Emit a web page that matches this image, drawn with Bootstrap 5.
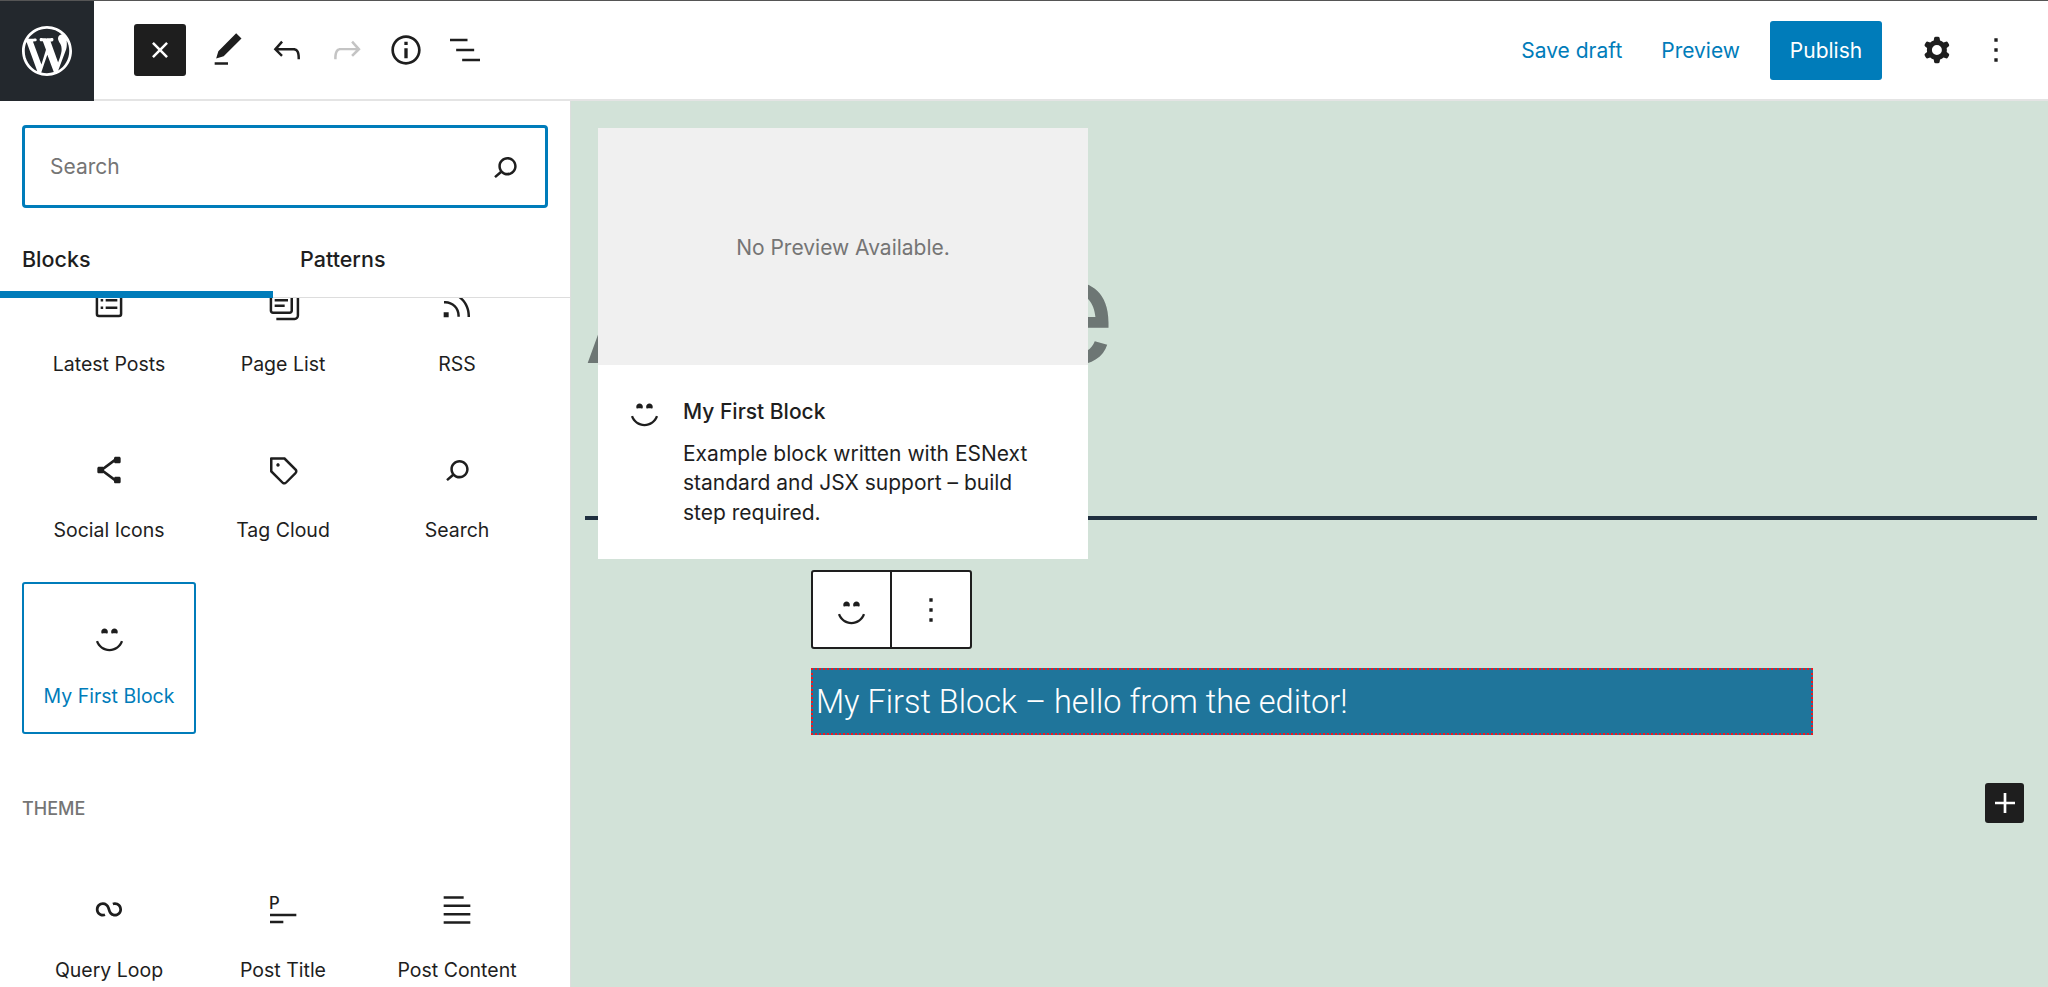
<!doctype html>
<html lang="en">
<head>
<meta charset="utf-8">
<title>Block editor</title>
<link href="https://cdn.jsdelivr.net/npm/bootstrap@5.3.0/dist/css/bootstrap.min.css" rel="stylesheet">
<style>
html,body{height:987px;overflow:hidden}
body{font-family:Inter,"Liberation Sans",sans-serif;color:#1e1e1e;background:#fff;font-size:20px}
svg{fill:currentColor;flex:none;display:block}
.wp-top{height:101px;border-top:1px solid #555;border-bottom:2px solid #e4e4e4;background:#fff}
.wp-logo{width:94px;height:100px;margin-top:-1px;margin-bottom:-2px;background:#23282d;color:#fff}
.wp-close{width:52px;height:52px;border-radius:3px;background:#1e1e1e;color:#fff;margin-left:40px;margin-right:22px}
.tool-ic{width:40px;height:40px}
.tool-wrap{gap:19.3px}
.redo-ic{color:#c4c4c4}
.wp-link{color:#007cba;text-decoration:none;font-size:21px;line-height:28px;margin-top:1px}
.gap-preview{margin-left:39px}
.wp-publish{width:112px;height:59px;background:#007cba;color:#fff;font-size:21px;border:0;border-radius:3px;padding:1px 0 0;margin-left:30px;margin-right:35px}
.more-ic{margin-left:19px;margin-right:32px}
.wp-side{width:571px;height:886px;border-right:1px solid #ddd;background:#fff}
.search-wrap{padding:24px 22px 0 22px}
.search-box{height:83px;border:3px solid #007cba;border-radius:4px;padding:1px 20px 0 23px}
.search-box input{border:0;outline:0;flex:1;font-size:21px;color:#1e1e1e;background:transparent;min-width:0}
.search-box input::placeholder{color:#757575;opacity:1}
.tab-row{height:90px;border-bottom:1px solid #ddd;margin-bottom:0}
.tab-item{width:273px;height:90px;font-weight:500;font-size:21.5px;color:#1e1e1e;text-decoration:none;padding:37px 0 0 22px;line-height:28px}
.tab-item.tab-on{border-bottom:7px solid #007cba}
.tab-item.tab-two{padding-left:27px}
.side-scroll{height:689px;overflow:hidden}
.side-inner{margin-top:-48px;padding-left:22px}
.blk-grid{display:grid;grid-template-columns:repeat(3,174px);row-gap:14px}
.blk-item{height:152px;border:2px solid transparent;border-radius:3px;text-align:center;font-size:19.5px;line-height:28px;display:flex;flex-direction:column;align-items:center;padding-top:32px}
.blk-item .ic40{width:40px;height:40px}
.blk-item .smile{width:33px;height:33px;margin:4px 0 3px}
.blk-item span{margin-top:25.5px}
.blk-sel{border-color:#007cba;color:#007cba}
.blk-sel svg{color:#1e1e1e}
.theme-head{margin:64px 0 36px;font-size:18px;line-height:22px;font-weight:500;color:#757575;text-transform:uppercase}
.wp-canvas{background:#d2e2d8;height:886px}
.head-area{padding:136px 0 0 13px}
.big-title{font-family:Inter,"Liberation Sans",sans-serif;font-size:146px;line-height:1;font-weight:400;letter-spacing:1.5px;color:#6d7674;margin:0;white-space:nowrap}
.sep-line{height:4px;background:#1f2f3f;margin:133px 11px 0 14px}
.blk-bar{width:161px;height:79px;margin:50px 0 0 240px;border:2px solid #1e1e1e;border-radius:3px;background:#fff}
.bar-a{width:79px;height:100%;border-right:2px solid #1e1e1e}
.bar-b{flex:1}
.hello-blk{width:1002px;height:67px;margin:19px 0 0 240px;background:#1f759b;border:2px dotted #f0151f;color:#fff;font-family:Roboto,"Liberation Sans",sans-serif;font-weight:300;font-size:32.5px;line-height:65px;padding-left:3px}
.plus-row{margin-top:48px;padding-right:24px}
.plus-btn{width:39px;height:40px;background:#1e1e1e;color:#fff;border-radius:3px}
.pop-card{left:27px;top:27px;width:490px;height:431px;background:#fff;z-index:5}
.pop-prev{height:237px;background:#f0f0f0;color:#757575;font-size:21px;padding-top:2px}
.pop-body{padding:32px 45px 0 30px;gap:22px;line-height:29.5px;font-size:21px;color:#1e1e1e}
.pop-body svg{width:33px;height:33px;margin-top:-2px}
.pop-title{font-weight:500;margin-bottom:12px}
</style>
</head>
<body>
<header class="wp-top d-flex align-items-center">
  <div class="wp-logo d-flex align-items-center justify-content-center">
    <svg width="50" height="50" viewBox="0 0 20 20"><path d="M20 10c0-5.51-4.49-10-10-10C4.48 0 0 4.49 0 10c0 5.52 4.48 10 10 10 5.51 0 10-4.48 10-10zM7.78 15.37L4.37 6.22c.55-.02 1.17-.08 1.17-.08.5-.06.44-1.13-.06-1.11 0 0-1.45.11-2.37.11-.18 0-.37 0-.58-.01C4.12 2.69 6.87 1.11 10 1.11c2.33 0 4.45.87 6.05 2.34-.68-.11-1.65.39-1.65 1.58 0 .74.45 1.36.9 2.1.35.61.55 1.36.55 2.46 0 1.49-1.4 5-1.4 5l-3.03-8.37c.54-.02.82-.17.82-.17.5-.05.44-1.25-.06-1.22 0 0-1.44.12-2.38.12-.87 0-2.33-.12-2.33-.12-.5-.03-.56 1.2-.06 1.22l.92.08 1.26 3.41zM17.41 10c.24-.64.74-1.87.43-4.25.7 1.29 1.05 2.71 1.05 4.25 0 3.29-1.73 6.24-4.4 7.78.97-2.59 1.94-5.2 2.92-7.78zM6.1 18.09C3.12 16.65 1.11 13.53 1.11 10c0-1.3.23-2.48.72-3.59C3.25 10.3 4.67 14.2 6.1 18.09zm4.03-6.63l2.58 6.98c-.86.29-1.76.45-2.71.45-.79 0-1.57-.11-2.29-.33.81-2.38 1.62-4.74 2.42-7.1z"/></svg>
  </div>
  <div class="wp-close d-flex align-items-center justify-content-center">
    <svg width="40" height="40" viewBox="0 0 24 24"><path d="M12 13.06l3.712 3.713 1.061-1.06L13.061 12l3.712-3.712-1.06-1.06L12 10.938 8.288 7.227l-1.061 1.06L10.939 12l-3.712 3.712 1.06 1.061L12 13.061z"/></svg>
  </div>
  <div class="d-flex align-items-center tool-wrap">
    <svg class="tool-ic" viewBox="0 0 24 24"><path d="M20.1 5.1L16.9 2 6.2 12.7l-1.3 4.4 4.5-1.3L20.1 5.1zM4 20.8h8v-1.5H4v1.5z"/></svg>
    <svg class="tool-ic" viewBox="0 0 24 24"><path d="M18.3 11.7c-.6-.6-1.4-.9-2.3-.9H6.7l2.9-3.3-1.1-1-4.5 5L8.5 16l1-1-2.7-2.7H16c.5 0 .9.2 1.3.5 1 1 1 3.4 1 4.5v.3h1.5v-.2c0-1.5 0-4.3-1.5-5.7z"/></svg>
    <svg class="tool-ic redo-ic" viewBox="0 0 24 24"><path d="M15.6 6.5l-1.1 1 2.9 3.3H8c-.9 0-1.7.3-2.3.9-1.4 1.5-1.4 4.2-1.4 5.6v.2h1.5v-.3c0-1.1 0-3.5 1-4.5.3-.3.7-.5 1.3-.5h9.2L14.5 15l1.1 1.1 4.6-4.6-4.6-5z"/></svg>
    <svg class="tool-ic" viewBox="0 0 24 24"><path d="M12 3.2c-4.8 0-8.8 3.9-8.8 8.8 0 4.8 3.9 8.8 8.8 8.8 4.8 0 8.8-3.9 8.8-8.8 0-4.8-4-8.8-8.8-8.8zm0 16c-4 0-7.2-3.3-7.2-7.2C4.8 8 8 4.8 12 4.8s7.2 3.3 7.2 7.2c0 4-3.2 7.2-7.2 7.2zM11 17h2v-6h-2v6zm0-8h2V7h-2v2z"/></svg>
    <svg class="tool-ic" viewBox="0 0 24 24"><path d="M3 5.2h10.5v1.5H3zM6.7 11.2h10.8v1.5H6.7zM10.3 17.2h10.7v1.5H10.3z"/></svg>
  </div>
  <div class="ms-auto d-flex align-items-center">
    <a class="wp-link" href="#">Save draft</a>
    <a class="wp-link gap-preview" href="#">Preview</a>
    <button class="wp-publish" type="button">Publish</button>
    <svg width="40" height="40" viewBox="0 0 24 24"><path fill-rule="evenodd" d="M10.289 4.836A1 1 0 0111.275 4h1.306a1 1 0 01.987.836l.244 1.466c.787.26 1.503.679 2.108 1.218l1.393-.522a1 1 0 011.216.437l.653 1.13a1 1 0 01-.23 1.273l-1.148.944a6.025 6.025 0 010 2.435l1.149.946a1 1 0 01.23 1.272l-.653 1.13a1 1 0 01-1.216.437l-1.394-.522c-.605.54-1.32.958-2.108 1.218l-.244 1.466a1 1 0 01-.987.836h-1.306a1 1 0 01-.986-.836l-.244-1.466a5.995 5.995 0 01-2.108-1.218l-1.394.522a1 1 0 01-1.217-.436l-.653-1.131a1 1 0 01.23-1.272l1.149-.946a6.026 6.026 0 010-2.435l-1.148-.944a1 1 0 01-.23-1.272l.653-1.131a1 1 0 011.217-.437l1.393.522a5.994 5.994 0 012.108-1.218l.244-1.466zM14.929 12a3 3 0 11-6 0 3 3 0 016 0z"/></svg>
    <svg width="40" height="40" viewBox="0 0 24 24" class="more-ic"><path d="M13 19h-2v-2h2v2zm0-6h-2v-2h2v2zm0-6h-2V5h2v2z"/></svg>
  </div>
</header>
<div class="d-flex">
  <aside class="wp-side flex-none">
    <div class="search-wrap">
      <div class="search-box d-flex align-items-center">
        <input type="text" placeholder="Search" aria-label="Search">
        <svg width="40" height="40" viewBox="0 0 24 24"><path d="M13.5 6C10.5 6 8 8.5 8 11.5c0 1.1.3 2.1.9 3l-3.4 3 1 1.1 3.4-2.9c1 .9 2.2 1.4 3.6 1.4 3 0 5.5-2.5 5.5-5.5C19 8.5 16.5 6 13.5 6zm0 9.5c-2.2 0-4-1.8-4-4s1.8-4 4-4 4 1.8 4 4-1.8 4-4 4z"/></svg>
      </div>
    </div>
    <div class="tab-row d-flex">
      <a class="tab-item tab-on" href="#">Blocks</a>
      <a class="tab-item tab-two" href="#">Patterns</a>
    </div>
    <div class="side-scroll">
      <div class="side-inner">
        <div class="blk-grid">
          <div class="blk-item"><svg class="ic40" viewBox="0 0 24 24"><path d="M18 5.5H6a.5.5 0 00-.5.5v12a.5.5 0 00.5.5h12a.5.5 0 00.5-.5V6a.5.5 0 00-.5-.5zM6 4h12a2 2 0 012 2v12a2 2 0 01-2 2H6a2 2 0 01-2-2V6a2 2 0 012-2zm1 5h1.5v1.5H7V9zm1.5 4.5H7V15h1.5v-1.5zM10 9h7v1.5h-7V9zm7 4.5h-7V15h7v-1.5z"/></svg><span>Latest Posts</span></div>
          <div class="blk-item"><svg class="ic40" viewBox="0 0 24 24"><path d="M7 13.8h6v-1.5H7v1.5zM18 16V4c0-1.1-.9-2-2-2H6c-1.1 0-2 .9-2 2v12c0 1.1.9 2 2 2h10c1.1 0 2-.9 2-2zM5.5 16V4c0-.3.2-.5.5-.5h10c.3 0 .5.2.5.5v12c0 .3-.2.5-.5.5H6c-.3 0-.5-.2-.5-.5zM7 10.5h8V9H7v1.5zm0-3.5h8V5.5H7V7zM20.2 6v13c0 .7-.6 1.2-1.2 1.2H8v1.5h11c1.5 0 2.7-1.2 2.7-2.8V6h-1.5z"/></svg><span>Page List</span></div>
          <div class="blk-item"><svg class="ic40" viewBox="0 0 24 24"><path d="M5 10.2h-.8v1.5H5c1.9 0 3.8.8 5.1 2.1 1.4 1.4 2.1 3.2 2.1 5.1v.8h1.5V19c0-2.3-.9-4.5-2.6-6.2-1.6-1.6-3.8-2.6-6.1-2.6zm10.4-1.6C12.6 5.8 8.9 4.2 5 4.2h-.8v1.5H5c3.5 0 6.9 1.4 9.4 3.9s3.9 5.8 3.9 9.4v.8h1.5V19c0-3.9-1.6-7.6-4.4-10.4zM4 20h3v-3H4v3z"/></svg><span>RSS</span></div>
          <div class="blk-item"><svg class="ic40" viewBox="0 0 24 24"><path d="M9 11.8l6.1-4.5c.1.4.4.7.9.7h2c.6 0 1-.4 1-1V5c0-.6-.4-1-1-1h-2c-.6 0-1 .4-1 1v.4l-6.4 4.8c-.2-.1-.4-.2-.6-.2H6c-.6 0-1 .4-1 1v2c0 .6.4 1 1 1h2c.2 0 .4-.1.6-.2l6.4 4.8v.4c0 .6.4 1 1 1h2c.6 0 1-.4 1-1v-2c0-.6-.4-1-1-1h-2c-.5 0-.8.3-.9.7L9 12.2v-.4z"/></svg><span>Social Icons</span></div>
          <div class="blk-item"><svg class="ic40" viewBox="0 0 24 24"><path d="M20.1 11.2l-6.7-6.7c-.1-.1-.3-.2-.5-.2H5c-.4-.1-.8.3-.8.7v7.8c0 .2.1.4.2.5l6.7 6.7c.2.2.5.4.7.5s.6.2.9.2c.3 0 .6-.1.9-.2.3-.1.5-.3.8-.5l5.6-5.6c.4-.4.7-1 .7-1.6.1-.6-.2-1.2-.6-1.6zM19 13.4L13.4 19c-.1.1-.2.1-.3.2-.2.1-.4.1-.6 0-.1 0-.2-.1-.3-.2l-6.5-6.5V5.8h6.8l6.5 6.5c.2.2.2.4.2.6 0 .1 0 .3-.2.5zM9 8c-.6 0-1 .4-1 1s.4 1 1 1 1-.4 1-1-.4-1-1-1z"/></svg><span>Tag Cloud</span></div>
          <div class="blk-item"><svg class="ic40" viewBox="0 0 24 24"><path d="M13.5 6C10.5 6 8 8.5 8 11.5c0 1.1.3 2.1.9 3l-3.4 3 1 1.1 3.4-2.9c1 .9 2.2 1.4 3.6 1.4 3 0 5.5-2.5 5.5-5.5C19 8.5 16.5 6 13.5 6zm0 9.5c-2.2 0-4-1.8-4-4s1.8-4 4-4 4 1.8 4 4-1.8 4-4 4z"/></svg><span>Search</span></div>
          <div class="blk-item blk-sel"><svg class="smile" viewBox="0 0 20 20"><path d="M7 5.2c1.1 0 2 .89 2 2 0 .37-.11.71-.28 1C8.72 8.2 8 8 7 8s-1.72.2-1.72.2c-.17-.29-.28-.63-.28-1 0-1.11.9-2 2-2zm6 0c1.11 0 2 .89 2 2 0 .37-.11.71-.28 1 0 0-.72-.2-1.72-.2s-1.72.2-1.72.2c-.17-.29-.28-.63-.28-1 0-1.11.89-2 2-2zm-3 13.7c3.72 0 7.03-2.36 8.23-5.88l-1.32-.46C15.9 15.52 13.12 17.5 10 17.5s-5.9-1.98-6.91-4.94l-1.32.46c1.2 3.52 4.51 5.88 8.23 5.88z"/></svg><span>My First Block</span></div>
        </div>
        <div class="theme-head">Theme</div>
        <div class="blk-grid">
          <div class="blk-item"><svg class="ic40" viewBox="0 0 24 24"><path d="M18.1823 11.6392C18.1823 13.0804 17.0139 14.2487 15.5727 14.2487C14.3579 14.2487 13.335 13.4179 13.0453 12.2922L13.0377 12.2625L13.0278 12.2335L12.3985 10.377L12.3942 10.3785C11.8571 8.64997 10.246 7.39405 8.33961 7.39405C5.99509 7.39405 4.09448 9.29465 4.09448 11.6392C4.09448 13.9837 5.99509 15.8843 8.33961 15.8843C8.88499 15.8843 9.40822 15.781 9.88943 15.5923L9.29212 14.0697C8.99812 14.185 8.67729 14.2487 8.33961 14.2487C6.89838 14.2487 5.73003 13.0804 5.73003 11.6392C5.73003 10.1979 6.89838 9.02959 8.33961 9.02959C9.55444 9.02959 10.5773 9.86046 10.867 10.9862L10.8772 10.9836L11.4695 12.7311C11.9515 14.546 13.6048 15.8843 15.5727 15.8843C17.9172 15.8843 19.8178 13.9837 19.8178 11.6392C19.8178 9.29465 17.9172 7.39404 15.5727 7.39404C15.0287 7.39404 14.5066 7.4968 14.0264 7.6847L14.6223 9.20781C14.9158 9.093 15.2358 9.02959 15.5727 9.02959C17.0139 9.02959 18.1823 10.1979 18.1823 11.6392Z"/></svg><span>Query Loop</span></div>
          <div class="blk-item"><svg class="ic40" viewBox="0 0 24 24"><text x="3.6" y="11.5" font-family="Inter,'Liberation Sans',sans-serif" font-size="10" font-weight="500">P</text><path d="M4.2 14.2H20v1.5H4.2zM4.2 18.4h8v1.5h-8z"/></svg><span>Post Title</span></div>
          <div class="blk-item"><svg class="ic40" viewBox="0 0 24 24"><path d="M4 3.75h12v1.5H4zM4 8.75h16v1.5H4zM4 13.75h16v1.5H4zM4 18.75h16v1.5H4z"/></svg><span>Post Content</span></div>
        </div>
      </div>
    </div>
  </aside>
  <main class="wp-canvas flex-fill position-relative overflow-hidden">
    <div class="pop-card position-absolute">
      <div class="pop-prev d-flex align-items-center justify-content-center">No Preview Available.</div>
      <div class="pop-body d-flex">
        <svg viewBox="0 0 20 20"><path d="M7 5.2c1.1 0 2 .89 2 2 0 .37-.11.71-.28 1C8.72 8.2 8 8 7 8s-1.72.2-1.72.2c-.17-.29-.28-.63-.28-1 0-1.11.9-2 2-2zm6 0c1.11 0 2 .89 2 2 0 .37-.11.71-.28 1 0 0-.72-.2-1.72-.2s-1.72.2-1.72.2c-.17-.29-.28-.63-.28-1 0-1.11.89-2 2-2zm-3 13.7c3.72 0 7.03-2.36 8.23-5.88l-1.32-.46C15.9 15.52 13.12 17.5 10 17.5s-5.9-1.98-6.91-4.94l-1.32.46c1.2 3.52 4.51 5.88 8.23 5.88z"/></svg>
        <div>
          <div class="pop-title">My First Block</div>
          <div>Example block written with ESNext standard and JSX support – build step required.</div>
        </div>
      </div>
    </div>
    <div class="head-area"><h1 class="big-title">Archive</h1></div>
    <div class="sep-line"></div>
    <div class="blk-bar d-flex">
      <div class="bar-a d-flex align-items-center justify-content-center">
        <svg width="33" height="33" viewBox="0 0 20 20"><path d="M7 5.2c1.1 0 2 .89 2 2 0 .37-.11.71-.28 1C8.72 8.2 8 8 7 8s-1.72.2-1.72.2c-.17-.29-.28-.63-.28-1 0-1.11.9-2 2-2zm6 0c1.11 0 2 .89 2 2 0 .37-.11.71-.28 1 0 0-.72-.2-1.72-.2s-1.72.2-1.72.2c-.17-.29-.28-.63-.28-1 0-1.11.89-2 2-2zm-3 13.7c3.72 0 7.03-2.36 8.23-5.88l-1.32-.46C15.9 15.52 13.12 17.5 10 17.5s-5.9-1.98-6.91-4.94l-1.32.46c1.2 3.52 4.51 5.88 8.23 5.88z"/></svg>
      </div>
      <div class="bar-b d-flex align-items-center justify-content-center">
        <svg width="40" height="40" viewBox="0 0 24 24"><path d="M13 19h-2v-2h2v2zm0-6h-2v-2h2v2zm0-6h-2V5h2v2z"/></svg>
      </div>
    </div>
    <div class="hello-blk">My First Block – hello from the editor!</div>
    <div class="plus-row d-flex justify-content-end">
      <div class="plus-btn d-flex align-items-center justify-content-center">
        <svg width="40" height="40" viewBox="0 0 24 24"><path d="M18 11.2h-5.2V6h-1.6v5.2H6v1.6h5.2V18h1.6v-5.2H18z"/></svg>
      </div>
    </div>
  </main>
</div>
<script src="https://cdn.jsdelivr.net/npm/bootstrap@5.3.0/dist/js/bootstrap.bundle.min.js"></script>
</body>
</html>
